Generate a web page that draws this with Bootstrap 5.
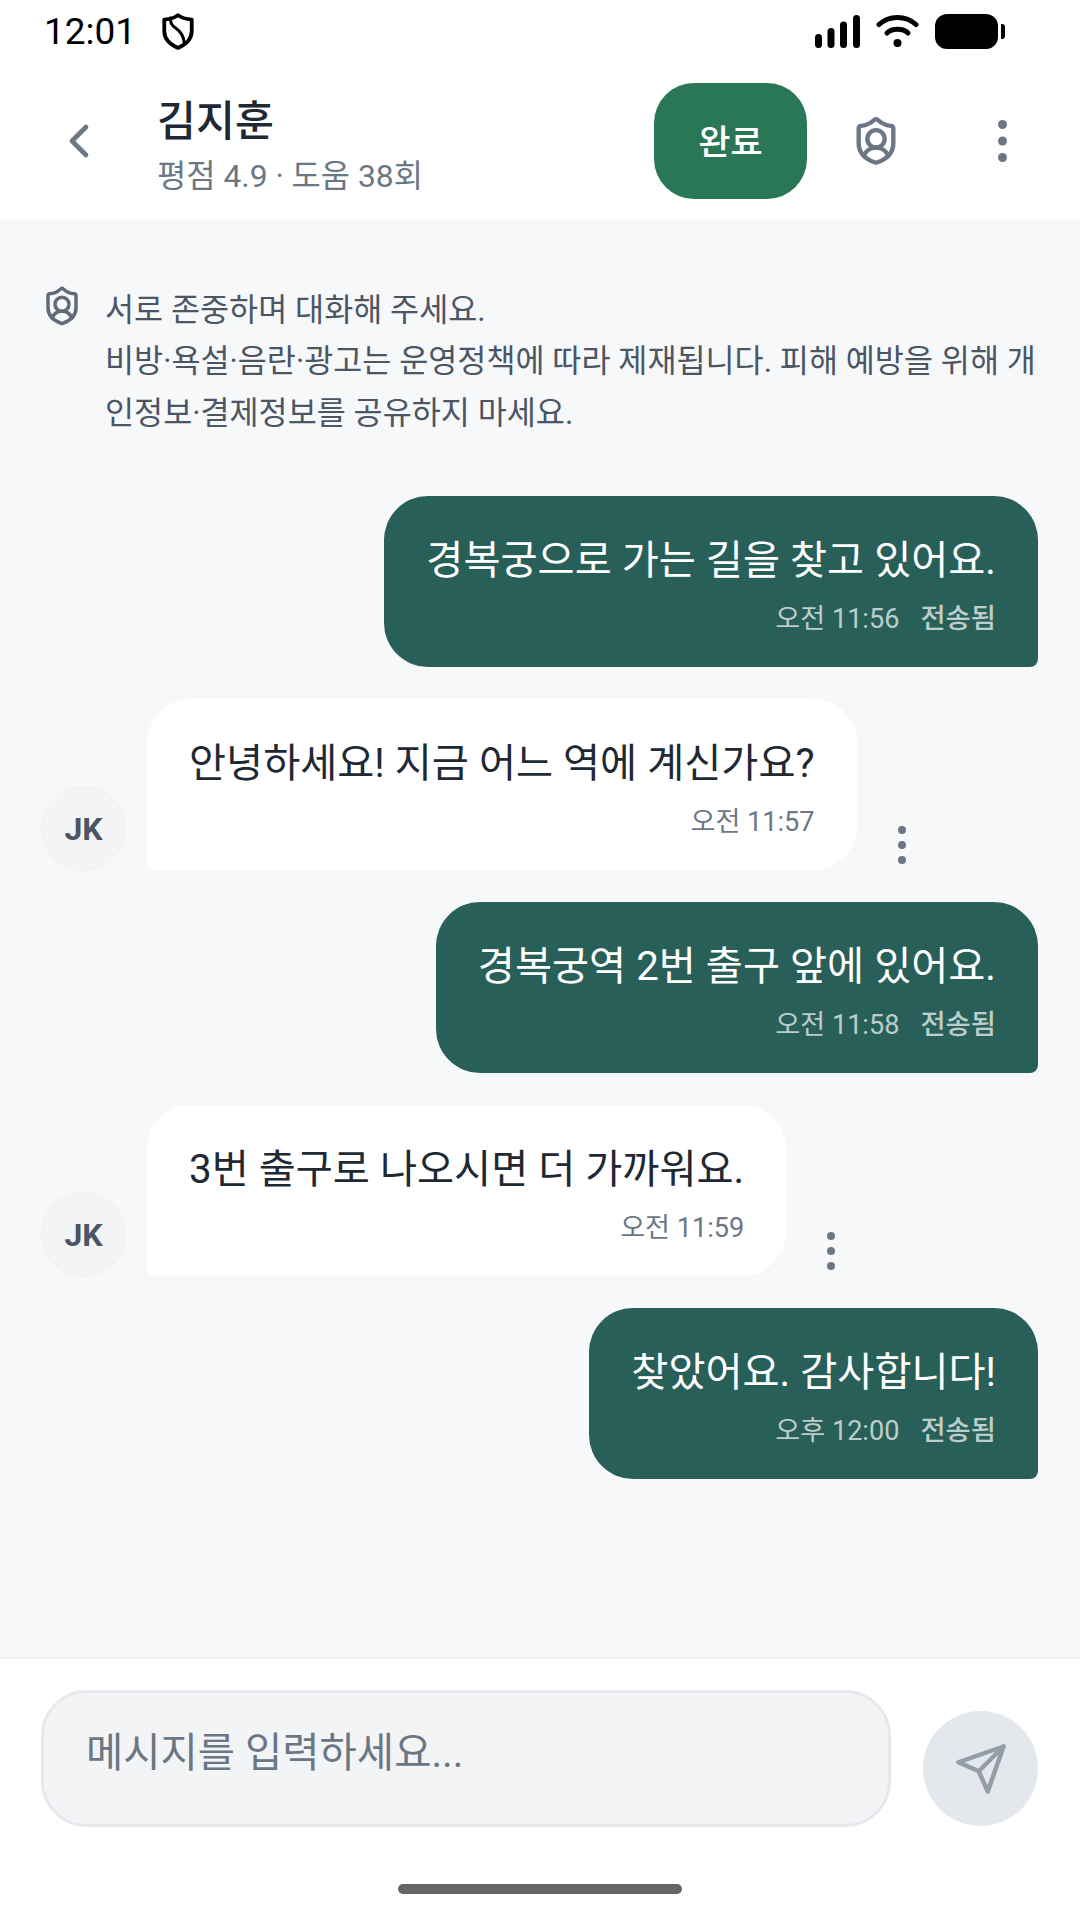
<!DOCTYPE html>
<html lang="ko">

<head>
    <meta charset="UTF-8">
    <meta name="viewport" content="width=device-width, initial-scale=1.0">
    <title>Chat</title>
    <link href="https://cdn.jsdelivr.net/npm/bootstrap@5.3.2/dist/css/bootstrap.min.css" rel="stylesheet">
    <style>
        body {
            font-family: Roboto, 'Noto Sans CJK KR', sans-serif;
            background-color: #fff;
            color: #1f2933;
            width: 1080px;
            height: 1920px;
        }

        .screen { height: 1920px; }

        .status-bar {
            height: 62px;
            padding: 0 75px 0 44px;
            color: #000;
        }

        .status-time { font-size: 37px; line-height: 1; margin-right: 26px; }

        .top-header {
            height: 158px;
            padding-left: 51px;
            padding-right: 73px;
        }

        .back-icon { margin-right: 50px; }
        .peer-name { font-size: 42.4px; font-weight: 500; line-height: 48px; color: #1f2933; margin-top: 11px; }
        .peer-meta { font-size: 31.8px; line-height: 40px; color: #6b7785; margin-top: 10px; }

        .btn-done {
            width: 153px;
            height: 116px;
            padding: 12px 0 6px;
            border-radius: 40px;
            background-color: #2a7757;
            color: #fff;
            font-size: 35px;
            font-weight: 500;
            border: 0;
            margin-right: 43px;
        }

        .head-dots { margin-left: 96px; }

        .chat-area {
            background-color: #f7f8fa;
            padding: 65px 42px 0 41px;
            min-height: 0;
        }

        .notice {
            font-size: 31.6px;
            line-height: 51.4px;
            color: #4b5563;
            word-break: break-all;
            margin-bottom: 57px;
        }

        .notice-icon { margin: 0 22px 0 0; }

        .bubble {
            height: 171px;
            padding: 37px 42px 0;
            font-size: 40.3px;
            line-height: 56px;
            white-space: nowrap;
        }

        .bubble-me {
            background-color: #295f59;
            color: #fff;
            border-radius: 44px 44px 8px 44px;
        }

        .bubble-you {
            background-color: #fff;
            color: #1f2933;
            border-radius: 44px 44px 44px 8px;
        }

        .msg-time {
            font-size: 27.1px;
            line-height: 36px;
            margin-top: 12px;
            gap: 21px;
        }

        .bubble-me .msg-time { color: rgba(255, 255, 255, .7); }
        .bubble-me .msg-state { font-size: 27.4px; font-weight: 500; }
        .bubble-you .msg-time { color: #6b7785; }

        .msg-gap { margin-bottom: 32px; }

        .avatar {
            width: 85px;
            height: 85px;
            margin-right: 21px;
            margin-bottom: -1px;
            border-radius: 50%;
            background-color: #f3f4f6;
            border: 1px solid #eff0f2;
            color: #4b5563;
            font-size: 32px;
            font-weight: 700;
        }

        .msg-dots { margin: 0 0 6px 25px; }

        .composer {
            height: 263px;
            border-top: 2px solid #f0f1f3;
            padding: 31px 42px 0 41px;
        }

        .composer .form-control {
            width: 850px;
            height: 137px;
            border: 3px solid #e6e8ee;
            border-radius: 46px;
            background-color: #f3f4f6;
            font-size: 40.5px;
            padding: 0 42px 12px;
            color: #1f2933;
            box-shadow: none;
        }

        .composer .form-control::placeholder { color: #6b7785; opacity: 1; }

        .send-btn {
            width: 115px;
            height: 115px;
            margin: 21px 0 0 32px;
            border-radius: 50%;
            border: 0;
            padding: 0;
            background-color: #e4e7eb;
        }

        .home-bar {
            width: 284px;
            height: 10px;
            border-radius: 5px;
            background-color: #666;
            bottom: 26px;
            left: 398px;
        }
    </style>
</head>

<body>
    <div class="screen d-flex flex-column">
        <div class="status-bar d-flex align-items-center flex-shrink-0">
            <span class="status-time">12:01</span>
            <svg width="32" height="37" viewBox="0 0 30 35" fill="none" stroke="#000" stroke-width="3.600" stroke-linejoin="round">
                <path d="M15 2C18 4.500 23 5.800 28 6.200V17C28 25 22 30 15 33C8 30 2 25 2 17V6.200C7 5.800 12 4.500 15 2Z" />
                <path d="M8.500 3.500C7 8 8.500 11.500 13 14.500C17.500 17.500 20.500 21 21 29" stroke-width="2.800" />
            </svg>
            <div class="ms-auto d-flex align-items-center gap-3">
                <svg width="45" height="33" viewBox="0 0 45 33" fill="#000">
                    <rect x="0" y="19" width="7" height="14" rx="3.500" />
                    <rect x="12.500" y="13" width="7" height="20" rx="3.500" />
                    <rect x="25" y="6.500" width="7" height="26.500" rx="3.500" />
                    <rect x="38" y="0" width="7" height="33" rx="3.500" />
                </svg>
                <svg width="43" height="34" viewBox="0 0 43 34" fill="none" stroke="#000" stroke-width="5" stroke-linecap="round">
                    <path d="M3 10.500C13 1 30 1 40 10.500" />
                    <path d="M11 19C16 14 27 14 32 19" />
                    <circle cx="21.500" cy="29" r="4" fill="#000" stroke="none" />
                </svg>
                <svg width="70" height="35" viewBox="0 0 70 35" fill="#000">
                    <rect x="0" y="0" width="63" height="35" rx="12" />
                    <path d="M66 10h1a3 3 0 0 1 3 3v9a3 3 0 0 1-3 3h-1Z" />
                </svg>
            </div>
        </div>

        <header class="top-header d-flex align-items-center flex-shrink-0">
            <svg class="back-icon" width="56" height="56" viewBox="0 0 24 24" fill="none" stroke="#6b7785" stroke-width="2" stroke-linecap="round" stroke-linejoin="round">
                <path d="m15 18-6-6 6-6" />
            </svg>
            <div>
                <div class="peer-name">김지훈</div>
                <div class="peer-meta">평점 4.9 · 도움 38회</div>
            </div>
            <button type="button" class="btn btn-done ms-auto">완료</button>
            <svg width="52" height="52" viewBox="0 0 24 24" fill="none" stroke="#6b7785" stroke-width="2" stroke-linecap="round" stroke-linejoin="round">
                <path d="M20 13c0 5-3.500 7.500-7.660 8.950a1 1 0 0 1-.67-.01C7.500 20.500 4 18 4 13V6a1 1 0 0 1 1-1c2 0 4.500-1.200 6.240-2.720a1.170 1.170 0 0 1 1.520 0C14.510 3.810 17 5 19 5a1 1 0 0 1 1 1z" />
                <path d="M6.376 18.910a6 6 0 0 1 11.249.003" />
                <circle cx="12" cy="11" r="4" />
            </svg>
            <svg class="head-dots" width="9" height="42" viewBox="0 0 9 42" fill="#6b7785">
                <circle cx="4.500" cy="4.500" r="4.500" />
                <circle cx="4.500" cy="21" r="4.500" />
                <circle cx="4.500" cy="37.500" r="4.500" />
            </svg>
        </header>

        <main class="chat-area flex-grow-1">
            <div class="notice d-flex">
                <svg class="notice-icon flex-shrink-0" width="42" height="42" viewBox="0 0 24 24" fill="none" stroke="#5f6b78" stroke-width="2" stroke-linecap="round" stroke-linejoin="round">
                    <path d="M20 13c0 5-3.500 7.500-7.660 8.950a1 1 0 0 1-.67-.01C7.500 20.500 4 18 4 13V6a1 1 0 0 1 1-1c2 0 4.500-1.200 6.240-2.720a1.170 1.170 0 0 1 1.520 0C14.510 3.810 17 5 19 5a1 1 0 0 1 1 1z" />
                    <path d="M6.376 18.910a6 6 0 0 1 11.249.003" />
                    <circle cx="12" cy="11" r="4" />
                </svg>
                <div>서로 존중하며 대화해 주세요.<br>비방·욕설·음란·광고는 운영정책에 따라 제재됩니다. 피해 예방을 위해 개인정보·결제정보를 공유하지 마세요.</div>
            </div>

            <div class="d-flex justify-content-end msg-gap">
                <div class="bubble bubble-me">
                    <div>경복궁으로 가는 길을 찾고 있어요.</div>
                    <div class="msg-time d-flex justify-content-end"><span>오전 11:56</span><span class="msg-state">전송됨</span></div>
                </div>
            </div>

            <div class="d-flex align-items-end msg-gap">
                <div class="avatar d-flex align-items-center justify-content-center flex-shrink-0">JK</div>
                <div class="bubble bubble-you">
                    <div>안녕하세요! 지금 어느 역에 계신가요?</div>
                    <div class="msg-time d-flex justify-content-end"><span>오전 11:57</span></div>
                </div>
                <svg class="msg-dots" width="40" height="38" viewBox="0 0 40 38" fill="#6b7785">
                    <circle cx="20" cy="4" r="4" />
                    <circle cx="20" cy="19" r="4" />
                    <circle cx="20" cy="34" r="4" />
                </svg>
            </div>

            <div class="d-flex justify-content-end msg-gap">
                <div class="bubble bubble-me">
                    <div>경복궁역 2번 출구 앞에 있어요.</div>
                    <div class="msg-time d-flex justify-content-end"><span>오전 11:58</span><span class="msg-state">전송됨</span></div>
                </div>
            </div>

            <div class="d-flex align-items-end msg-gap">
                <div class="avatar d-flex align-items-center justify-content-center flex-shrink-0">JK</div>
                <div class="bubble bubble-you">
                    <div>3번 출구로 나오시면 더 가까워요.</div>
                    <div class="msg-time d-flex justify-content-end"><span>오전 11:59</span></div>
                </div>
                <svg class="msg-dots" width="40" height="38" viewBox="0 0 40 38" fill="#6b7785">
                    <circle cx="20" cy="4" r="4" />
                    <circle cx="20" cy="19" r="4" />
                    <circle cx="20" cy="34" r="4" />
                </svg>
            </div>

            <div class="d-flex justify-content-end">
                <div class="bubble bubble-me">
                    <div>찾았어요. 감사합니다!</div>
                    <div class="msg-time d-flex justify-content-end"><span>오후 12:00</span><span class="msg-state">전송됨</span></div>
                </div>
            </div>
        </main>

        <footer class="composer d-flex align-items-start flex-shrink-0">
            <input type="text" class="form-control flex-shrink-0" placeholder="메시지를 입력하세요...">
            <button type="button" class="send-btn d-flex align-items-center justify-content-center flex-shrink-0">
                <svg width="54" height="54" viewBox="0 0 24 24" fill="none" stroke="#939da6" stroke-width="2" stroke-linecap="round" stroke-linejoin="round">
                    <path d="M22 2 11 13" />
                    <path d="M22 2 15 22 11 13 2 9Z" />
                </svg>
            </button>
        </footer>
    </div>
    <div class="home-bar position-absolute"></div>

    <script src="https://cdn.jsdelivr.net/npm/bootstrap@5.3.2/dist/js/bootstrap.bundle.min.js"></script>
</body>

</html>
